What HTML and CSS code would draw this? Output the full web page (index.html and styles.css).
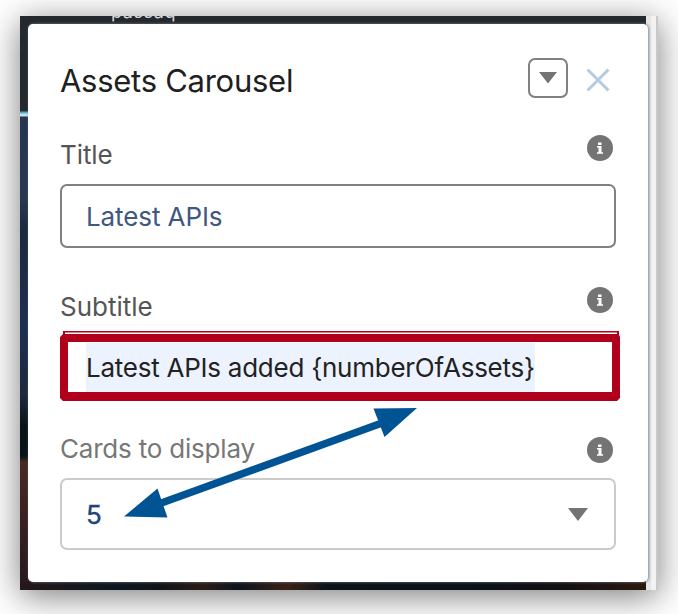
FILE: index.html
```
<!DOCTYPE html>
<html lang="en">
<head>
<meta charset="utf-8">
<title>Assets Carousel</title>
<link rel="stylesheet" href="styles.css">
</head>
<body>
<main class="backdrop">
  <span class="page-text">passaq</span>
  <section class="panel">
    <header class="header">
      <h1 class="heading">Assets Carousel</h1>
      <button class="menu" aria-label="Options"><svg width="18" height="12" viewBox="0 0 18 12"><path d="M0 0H18L9 11.5Z"/></svg></button>
      <button class="close" aria-label="Close"><svg width="24" height="24" viewBox="0 0 24 24"><path d="M1.5 1.5 22.5 22.5M22.5 1.5 1.5 22.5"/></svg></button>
    </header>
    <div class="label-row">
      <label class="label label-title">Title</label>
      <svg class="info" width="26" height="27" viewBox="0 -1 26 27"><circle cx="13" cy="13" r="13"/><path d="M11 7.500h3.500v2.600H11zM10 11h4.500v6.200H16v1.600h-6v-1.600h1.500v-4.600H10z"/></svg>
    </div>
    <div class="field"><span class="value value-title">Latest APIs</span></div>
    <div class="label-row">
      <label class="label label-subtitle">Subtitle</label>
      <svg class="info" width="26" height="26" viewBox="0 0 26 26"><circle cx="13" cy="13" r="13"/><path d="M11 7.500h3.500v2.600H11zM10 11h4.500v6.200H16v1.600h-6v-1.600h1.500v-4.600H10z"/></svg>
    </div>
    <div class="field marked"><span class="value selected">Latest APIs added {numberOfAssets}</span></div>
    <div class="label-row label-row-cards">
      <label class="label label-cards">Cards to display</label>
      <svg class="info" width="26" height="26" viewBox="0 0 26 26"><circle cx="13" cy="13" r="13"/><path d="M11 7.500h3.500v2.600H11zM10 11h4.500v6.200H16v1.600h-6v-1.600h1.500v-4.600H10z"/></svg>
    </div>
    <div class="field select"><span class="value value-count">5</span><svg class="caret" width="20" height="13" viewBox="0 0 20 13"><path d="M0 0H20L10 13Z"/></svg></div>
  </section>
</main>
<svg class="overlay" width="678" height="614" viewBox="0 0 678 614">
  <path class="callout" fill-rule="evenodd" d="M63 331H619V335L620 337V398L617 401H63L60 398V337L63 334ZM65 332.5V334H617V332.5ZM68 342V392H612V342Z"/>
  <path class="shaft" d="M160 503.500 382 423"/>
  <path class="head" d="M124 516.500 157.500 488.500 167.500 517.500ZM417 408 373.500 408.500 384.500 437Z"/>
</svg>
</body>
</html>
```
FILE: styles.css
```
* { box-sizing: border-box; }
body {
  margin: 0;
  width: 678px;
  height: 614px;
  padding: 16px 20px 24px;
  overflow: hidden;
  background: #fff;
  font-family: Inter, "Liberation Sans", sans-serif;
}
.backdrop {
  position: relative;
  width: 638px;
  height: 574px;
  padding: 8px 10px 8px 8px;
  background:
    linear-gradient(90deg, #e4e6e8 0 5px, #f2f2f2 5px 10px, #c9c9c9 10px) right / 12px 100% no-repeat,
    linear-gradient(90deg, #251719, #0b1721 15%, #111418 22%, #2b1b17 29%, #0c141c 34%, #281c1a 39%, #3a2118 42%, #0c1319 48%, #0b1119 72%, #120f11 85%, #2b170e 98%) bottom / 100% 8px no-repeat,
    linear-gradient(#24292e 0 95px, #42b4d6 96px 97px, #d0dce2 98px 100px, #25364f 101px, #283851 180px, #1b2a3e 215px, #1d2e50 310px, #1c2a3f 380px, #091216 410px, #07141a 440px, #4a2922 446px, #3a2020 500px, #25181d 574px);
  box-shadow: 0 6px 32px rgba(0, 0, 0, .52);
}
.page-text {
  position: absolute;
  left: 91px;
  top: 0;
  display: flex;
  align-items: flex-end;
  height: 6px;
  overflow: hidden;
  color: #d4d6d8;
  font-size: 18px;
  line-height: 21px;
  letter-spacing: .6px;
}
.panel {
  width: 620px;
  height: 558px;
  padding: 34px 32px 0;
  border-radius: 5px;
  background: #fff;
  box-shadow: 1px 0 3px #7c8790;
}
.header { display: flex; align-items: center; height: 40px; }
.heading {
  flex: 1;
  margin: 0;
  padding-top: 6px;
  color: #202020;
  font-size: 31px;
  font-weight: 400;
  line-height: 40px;
  letter-spacing: -.27px;
  white-space: nowrap;
}
button { display: grid; place-items: center; padding: 0; background: none; border: 0; }
.menu { width: 40px; height: 40px; border: 2px solid #808080; border-radius: 7px; }
.menu svg { fill: #747474; }
.close { width: 24px; height: 24px; margin: 4px 6px 0 18px; }
.close path { fill: none; stroke: #b5cbdf; stroke-width: 3; }
.label-row { display: flex; justify-content: space-between; height: 50px; margin-top: 36px; }
.field + .label-row { height: 45px; margin-top: 39px; }
.field + .label-row-cards { height: 41px; margin-top: 35px; }
.label { padding-top: 5px; color: #555; font-size: 26px; line-height: 32px; white-space: nowrap; }
.label-title { letter-spacing: -.1px; }
.field + .label-row .label { padding-top: 4px; }
.field + .label-row .label-cards { margin-top: -4px; padding-top: 0; color: #777; letter-spacing: -.2px; }
.info { margin-right: 3px; fill: #747474; }
.info path { fill: #fff; }
.field {
  display: flex;
  align-items: center;
  height: 64px;
  padding: 1px 24px 0;
  border: 2px solid #808080;
  border-radius: 7px;
}
.marked { height: 70px; border-color: transparent; }
.value { color: #405780; font-size: 26px; line-height: 50px; letter-spacing: -.1px; white-space: nowrap; }
.selected { color: #222; background: #ecf2fe; letter-spacing: -.25px; }
.select { justify-content: space-between; height: 72px; border-color: #cbcbcb; }
.value-count { color: #214679; -webkit-text-stroke: .4px #214679; }
.caret { margin: 0 2px 0 0; fill: #747474; }
.overlay { position: absolute; left: 0; top: 0; pointer-events: none; }
.callout { fill: #b0001b; }
.shaft { fill: none; stroke: #005493; stroke-width: 7.500; }
.head { fill: #005493; }
```
